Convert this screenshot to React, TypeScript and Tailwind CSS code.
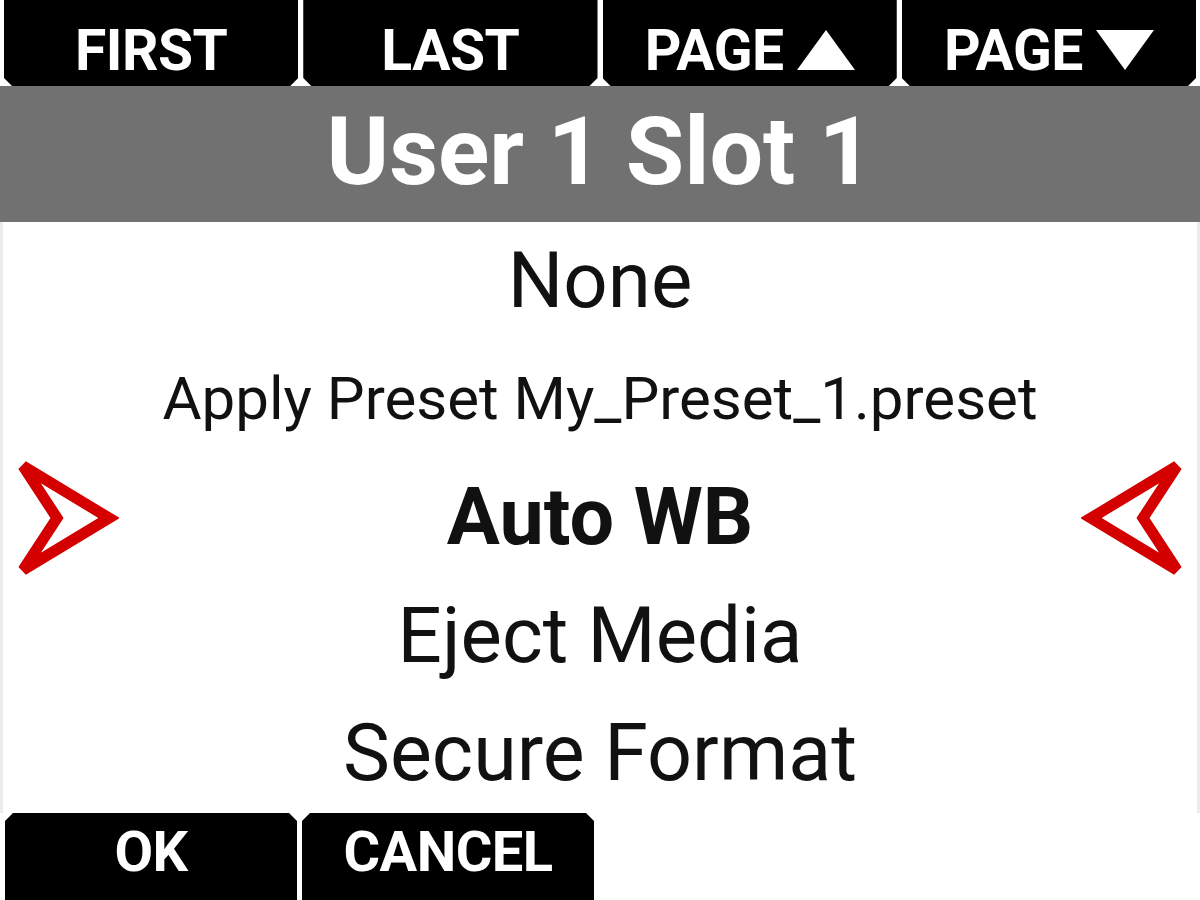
import React from 'react';

const topButtons = [
  { label: 'FIRST', arrow: null },
  { label: 'LAST', arrow: null },
  { label: 'PAGE', arrow: 'up' },
  { label: 'PAGE', arrow: 'down' },
];

const items = [
  { text: 'None', size: 'text-[78px]', bold: false },
  { text: 'Apply Preset My_Preset_1.preset', size: 'text-[60px]', bold: false },
  { text: 'Auto WB', size: 'text-[79px]', bold: true },
  { text: 'Eject Media', size: 'text-[78px]', bold: false },
  { text: 'Secure Format', size: 'text-[79px]', bold: false },
];

const Pointer = ({ flip }: { flip?: boolean }) => (
  <svg width="104" height="118" viewBox="0 0 104 118" className={flip ? '-scale-x-100' : ''}>
    <polygon
      points="8,7 94,59 8,111 42,59"
      fill="none"
      stroke="#d40000"
      strokeWidth="11"
      strokeLinejoin="miter"
    />
  </svg>
);

const Triangle = ({ dir }: { dir: string }) => (
  <svg width="58" height="40" viewBox="0 0 58 40" className="ml-[13px]">
    {dir === 'up' ? (
      <polygon points="29,0 58,40 0,40" fill="white" />
    ) : (
      <polygon points="0,0 58,0 29,40" fill="white" />
    )}
  </svg>
);

export default function App() {
  return (
    <div
      className="w-[1200px] h-[900px] bg-white flex flex-col overflow-hidden select-none"
      style={{ fontFamily: 'Roboto, "Liberation Sans", sans-serif' }}
    >
      {/* Soft keys */}
      <div className="h-[86px] flex gap-[5px] px-[4px]">
        {topButtons.map((b, i) => (
          <div
            key={i}
            className="flex-1 bg-black flex items-center justify-center pt-[14px] text-white font-bold text-[57px] leading-none [clip-path:polygon(0_0,100%_0,100%_calc(100%-8px),calc(100%-8px)_100%,8px_100%,0_calc(100%-8px))]"
          >
            <span className="tracking-[-0.5px]">{b.label}</span>
            {b.arrow && <Triangle dir={b.arrow} />}
          </div>
        ))}
      </div>

      {/* Title */}
      <div className="h-[136px] bg-[#717171] flex items-center justify-center">
        <span className="text-white font-bold text-[95px] leading-none pb-[6px]">
          User 1 Slot 1
        </span>
      </div>

      {/* List */}
      <div className="flex-1 flex flex-col border-x-[3px] border-[#ececec]">
        {items.map((it, i) => (
          <div key={i} className="flex-1 grid grid-cols-[135px_1fr_135px] items-center">
            <div className="flex justify-start pl-[12px]">{i === 2 && <Pointer />}</div>
            <div
              className={`text-center leading-none text-[#111] ${it.size} ${
                it.bold ? 'font-bold' : 'font-normal'
              }`}
            >
              {it.text}
            </div>
            <div className="flex justify-end pr-[12px]">{i === 2 && <Pointer flip />}</div>
          </div>
        ))}
      </div>

      {/* Bottom keys */}
      <div className="h-[87px] flex gap-[5px] pl-[5px]">
        {['OK', 'CANCEL'].map((t) => (
          <div
            key={t}
            className="w-[292px] bg-black flex justify-center pt-[11px] text-white font-bold text-[56px] leading-none [clip-path:polygon(8px_0,calc(100%-8px)_0,100%_8px,100%_100%,0_100%,0_8px)]"
          >
            <span className="tracking-[-0.5px]">{t}</span>
          </div>
        ))}
      </div>
    </div>
  );
}
